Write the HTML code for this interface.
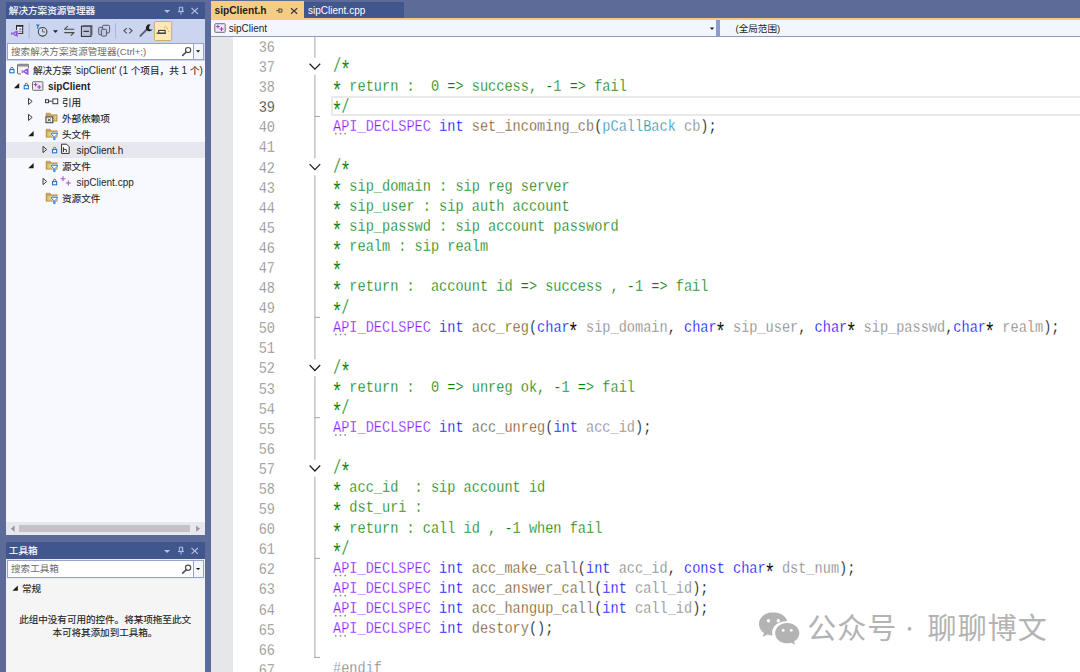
<!DOCTYPE html>
<html><head><meta charset="utf-8"><title>sipClient - Microsoft Visual Studio</title>
<style>
html,body{margin:0;padding:0}
body{width:1080px;height:672px;position:relative;overflow:hidden;background:#5d6b99;font-family:"Liberation Sans",sans-serif}
#bg div{position:absolute}
#ov{position:absolute;left:0;top:0;width:1080px;height:672px;font-family:"Liberation Sans","Noto Sans CJK SC",sans-serif}
#ov text{white-space:pre}
#code{position:absolute;left:333px;top:0;width:900px;height:672px;transform:scaleX(0.85000);transform-origin:0 0;font-family:"Liberation Mono",monospace;font-size:16.0px;color:#000}
#code .ln{position:absolute;left:0;white-space:pre;height:20.09px;line-height:20.69px}
#nums{position:absolute;left:0;top:0;width:0;height:0;font-family:"Liberation Mono",monospace;font-size:16.0px;color:#7f7f7f}
#nums .num{position:absolute;left:240px;width:41.18px;text-align:right;height:20.09px;line-height:20.69px;transform:scaleX(0.85000);transform-origin:0 0}
#nums .cur{color:#222}
#code{-webkit-text-stroke:0.26px #fff}
#nums{-webkit-text-stroke:0.3px #fff}
#code a{display:inline-block;transform:translateY(5.7px) scale(1.35,1.5);-webkit-text-stroke:0.1px #fff}
#code u{display:inline-block;text-decoration:none;transform:translateY(1.3px) scale(1,1.22)}
c{color:#008000} m{color:#8a1bff} k{color:#0000ff} f{color:#74531f} t{color:#2b91af} v{color:#808080}
</style></head><body>
<div id="bg">
<div style="left:5.5px;top:2px;width:199.5px;height:17px;background:#40568d;"></div>
<div style="left:5.5px;top:19px;width:199.5px;height:23px;background:#ccd5f0;"></div>
<div style="left:5.5px;top:42px;width:199.5px;height:20px;background:#ccd5f0;"></div>
<div style="left:7px;top:43px;width:197px;height:17px;background:#fff;border:1px solid #98a3c7;box-sizing:border-box;"></div>
<div style="left:193px;top:44px;width:10px;height:15px;background:#f3f6fd;border-left:1px solid #98a3c7;box-sizing:border-box;"></div>
<div style="left:5.5px;top:61px;width:199.5px;height:461px;background:#f7f9fe;"></div>
<div style="left:5.5px;top:141.5px;width:199.5px;height:16px;background:#e6e7ef;"></div>
<div style="left:5.5px;top:522px;width:199.5px;height:13px;background:#e8e8ec;"></div>
<div style="left:19px;top:525px;width:171px;height:7px;background:#c3c3c7;"></div>
<div style="left:5.5px;top:542px;width:199.5px;height:17px;background:#40568d;"></div>
<div style="left:5.5px;top:559px;width:199.5px;height:113px;background:#f5f5f5;"></div>
<div style="left:5.5px;top:559px;width:199.5px;height:20px;background:#e9ecf7;"></div>
<div style="left:7px;top:560px;width:197px;height:18px;background:#fff;border:1px solid #98a3c7;box-sizing:border-box;"></div>
<div style="left:193px;top:561px;width:10px;height:16px;background:#f3f6fd;border-left:1px solid #98a3c7;box-sizing:border-box;"></div>
<div style="left:211px;top:1px;width:93px;height:18px;background:#f5cc84;"></div>
<div style="left:304px;top:2px;width:100px;height:16px;background:#40568d;"></div>
<div style="left:211px;top:18px;width:869px;height:2px;background:#f5cc84;"></div>
<div style="left:211px;top:20px;width:869px;height:17px;background:#f3f6fe;"></div>
<div style="left:211px;top:36px;width:869px;height:1px;background:#8e9bbc;"></div>
<div style="left:716px;top:20px;width:4px;height:16px;background:#8c9ccd;"></div>
<div style="left:211px;top:37px;width:869px;height:635px;background:#fff;"></div>
<div style="left:211px;top:37px;width:22px;height:635px;background:#e6e7e8;"></div>
<div style="left:331px;top:96.3px;width:760px;height:20px;background:#fff;border:2px solid #e9e9e9;box-sizing:border-box;"></div>
</div>
<div id="nums">
<div class="num" style="top:38.00px">36</div>
<div class="num" style="top:58.09px">37</div>
<div class="num" style="top:78.18px">38</div>
<div class="num cur" style="top:98.27px">39</div>
<div class="num" style="top:118.36px">40</div>
<div class="num" style="top:138.45px">41</div>
<div class="num" style="top:158.54px">42</div>
<div class="num" style="top:178.63px">43</div>
<div class="num" style="top:198.72px">44</div>
<div class="num" style="top:218.81px">45</div>
<div class="num" style="top:238.90px">46</div>
<div class="num" style="top:258.99px">47</div>
<div class="num" style="top:279.08px">48</div>
<div class="num" style="top:299.17px">49</div>
<div class="num" style="top:319.26px">50</div>
<div class="num" style="top:339.35px">51</div>
<div class="num" style="top:359.44px">52</div>
<div class="num" style="top:379.53px">53</div>
<div class="num" style="top:399.62px">54</div>
<div class="num" style="top:419.71px">55</div>
<div class="num" style="top:439.80px">56</div>
<div class="num" style="top:459.89px">57</div>
<div class="num" style="top:479.98px">58</div>
<div class="num" style="top:500.07px">59</div>
<div class="num" style="top:520.16px">60</div>
<div class="num" style="top:540.25px">61</div>
<div class="num" style="top:560.34px">62</div>
<div class="num" style="top:580.43px">63</div>
<div class="num" style="top:600.52px">64</div>
<div class="num" style="top:620.61px">65</div>
<div class="num" style="top:640.70px">66</div>
<div class="num" style="top:660.79px">67</div>
</div>
<div id="code">
<div class="ln" style="top:36.40px"></div>
<div class="ln" style="top:56.49px"><c><u>/</u><a>*</a></c></div>
<div class="ln" style="top:76.58px"><c><a>*</a> return :  0 =&gt; success, -1 =&gt; fail</c></div>
<div class="ln" style="top:96.67px"><c><a>*</a><u>/</u></c></div>
<div class="ln" style="top:116.76px"><m>API_DECLSPEC</m> <k>int</k> <f>set_incoming_cb</f>(<t>pCallBack</t> <v>cb</v>);</div>
<div class="ln" style="top:136.85px"></div>
<div class="ln" style="top:156.94px"><c><u>/</u><a>*</a></c></div>
<div class="ln" style="top:177.03px"><c><a>*</a> sip_domain : sip reg server</c></div>
<div class="ln" style="top:197.12px"><c><a>*</a> sip_user : sip auth account</c></div>
<div class="ln" style="top:217.21px"><c><a>*</a> sip_passwd : sip account password</c></div>
<div class="ln" style="top:237.30px"><c><a>*</a> realm : sip realm</c></div>
<div class="ln" style="top:257.39px"><c><a>*</a></c></div>
<div class="ln" style="top:277.48px"><c><a>*</a> return :  account id =&gt; success , -1 =&gt; fail</c></div>
<div class="ln" style="top:297.57px"><c><a>*</a><u>/</u></c></div>
<div class="ln" style="top:317.66px"><m>API_DECLSPEC</m> <k>int</k> <f>acc_reg</f>(<k>char</k><a>*</a> <v>sip_domain</v>, <k>char</k><a>*</a> <v>sip_user</v>, <k>char</k><a>*</a> <v>sip_passwd</v>,<k>char</k><a>*</a> <v>realm</v>);</div>
<div class="ln" style="top:337.75px"></div>
<div class="ln" style="top:357.84px"><c><u>/</u><a>*</a></c></div>
<div class="ln" style="top:377.93px"><c><a>*</a> return :  0 =&gt; unreg ok, -1 =&gt; fail</c></div>
<div class="ln" style="top:398.02px"><c><a>*</a><u>/</u></c></div>
<div class="ln" style="top:418.11px"><m>API_DECLSPEC</m> <k>int</k> <f>acc_unreg</f>(<k>int</k> <v>acc_id</v>);</div>
<div class="ln" style="top:438.20px"></div>
<div class="ln" style="top:458.29px"><c><u>/</u><a>*</a></c></div>
<div class="ln" style="top:478.38px"><c><a>*</a> acc_id  : sip account id</c></div>
<div class="ln" style="top:498.47px"><c><a>*</a> dst_uri :</c></div>
<div class="ln" style="top:518.56px"><c><a>*</a> return : call id , -1 when fail</c></div>
<div class="ln" style="top:538.65px"><c><a>*</a><u>/</u></c></div>
<div class="ln" style="top:558.74px"><m>API_DECLSPEC</m> <k>int</k> <f>acc_make_call</f>(<k>int</k> <v>acc_id</v>, <k>const</k> <k>char</k><a>*</a> <v>dst_num</v>);</div>
<div class="ln" style="top:578.83px"><m>API_DECLSPEC</m> <k>int</k> <f>acc_answer_call</f>(<k>int</k> <v>call_id</v>);</div>
<div class="ln" style="top:598.92px"><m>API_DECLSPEC</m> <k>int</k> <f>acc_hangup_call</f>(<k>int</k> <v>call_id</v>);</div>
<div class="ln" style="top:619.01px"><m>API_DECLSPEC</m> <k>int</k> <f>destory</f>();</div>
<div class="ln" style="top:639.10px"></div>
<div class="ln" style="top:659.19px"><v>#endif</v></div>
</div>
<svg id="ov" width="1080" height="672" viewBox="0 0 1080 672">
<text x="8.80" y="14.20" font-size="9.6" fill="#fff" stroke="#fff" stroke-width="0.15" font-family="'Liberation Sans','Noto Sans CJK SC',sans-serif">解决方案资源管理器</text>
<text x="8.80" y="554.20" font-size="9.6" fill="#fff" stroke="#fff" stroke-width="0.15" font-family="'Liberation Sans','Noto Sans CJK SC',sans-serif">工具箱</text>
<text x="11.00" y="54.80" font-size="9.6" fill="#6d6d6d" font-family="'Liberation Sans','Noto Sans CJK SC',sans-serif">搜索解决方案资源管理器</text>
<text x="116.60" y="54.80" font-size="9.6" fill="#6d6d6d">(Ctrl+;)</text>
<text x="11.00" y="572.40" font-size="9.6" fill="#6d6d6d" font-family="'Liberation Sans','Noto Sans CJK SC',sans-serif">搜索工具箱</text>
<text x="33.00" y="73.60" font-size="9.6" fill="#1e1e1e" stroke="#1e1e1e" stroke-width="0.12" font-family="'Liberation Sans','Noto Sans CJK SC',sans-serif">解决方案</text>
<text x="71.40" y="73.60" font-size="10" fill="#1e1e1e"> &#x27;sipClient&#x27; (1 </text>
<text x="130.79" y="73.60" font-size="9.6" fill="#1e1e1e" stroke="#1e1e1e" stroke-width="0.12" font-family="'Liberation Sans','Noto Sans CJK SC',sans-serif">个项目，共</text>
<text x="178.79" y="73.60" font-size="10" fill="#1e1e1e"> 1 </text>
<text x="189.91" y="73.60" font-size="9.6" fill="#1e1e1e" stroke="#1e1e1e" stroke-width="0.12" font-family="'Liberation Sans','Noto Sans CJK SC',sans-serif">个</text>
<text x="199.51" y="73.60" font-size="10" fill="#1e1e1e">)</text>
<text x="48.00" y="89.60" font-size="10" fill="#1e1e1e" font-weight="bold">sipClient</text>
<text x="62.00" y="105.60" font-size="9.6" fill="#1e1e1e" stroke="#1e1e1e" stroke-width="0.12" font-family="'Liberation Sans','Noto Sans CJK SC',sans-serif">引用</text>
<text x="62.00" y="121.60" font-size="9.6" fill="#1e1e1e" stroke="#1e1e1e" stroke-width="0.12" font-family="'Liberation Sans','Noto Sans CJK SC',sans-serif">外部依赖项</text>
<text x="62.00" y="137.60" font-size="9.6" fill="#1e1e1e" stroke="#1e1e1e" stroke-width="0.12" font-family="'Liberation Sans','Noto Sans CJK SC',sans-serif">头文件</text>
<text x="76.50" y="153.60" font-size="10" fill="#1e1e1e">sipClient.h</text>
<text x="62.00" y="169.60" font-size="9.6" fill="#1e1e1e" stroke="#1e1e1e" stroke-width="0.12" font-family="'Liberation Sans','Noto Sans CJK SC',sans-serif">源文件</text>
<text x="76.50" y="185.60" font-size="10" fill="#1e1e1e">sipClient.cpp</text>
<text x="62.00" y="201.60" font-size="9.6" fill="#1e1e1e" stroke="#1e1e1e" stroke-width="0.12" font-family="'Liberation Sans','Noto Sans CJK SC',sans-serif">资源文件</text>
<text x="22.00" y="592.00" font-size="9.6" fill="#1e1e1e" stroke="#1e1e1e" stroke-width="0.12" font-family="'Liberation Sans','Noto Sans CJK SC',sans-serif">常规</text>
<text x="19.20" y="623.30" font-size="9.6" letter-spacing="-0.05" fill="#1e1e1e" stroke="#1e1e1e" stroke-width="0.12" font-family="'Liberation Sans','Noto Sans CJK SC',sans-serif">此组中没有可用的控件。将某项拖至此文</text>
<text x="52.40" y="636.40" font-size="9.6" letter-spacing="-0.05" fill="#1e1e1e" stroke="#1e1e1e" stroke-width="0.12" font-family="'Liberation Sans','Noto Sans CJK SC',sans-serif">本可将其添加到工具箱。</text>
<text x="214.5" y="13.8" font-size="10.2" font-weight="bold" fill="#1e1e1e">sipClient.h</text>
<text x="308" y="13.6" font-size="10" fill="#fff">sipClient.cpp</text>
<text x="228.7" y="32" font-size="10" fill="#1e1e1e">sipClient</text>
<text x="735.50" y="32.00" font-size="9.6" fill="#1e1e1e">(</text>
<text x="738.70" y="32.00" font-size="9.6" fill="#1e1e1e" font-family="'Liberation Sans','Noto Sans CJK SC',sans-serif">全局范围</text>
<text x="777.10" y="32.00" font-size="9.6" fill="#1e1e1e">)</text>
<rect x="314.4" y="37.0" width="1" height="20.9" fill="#a6a6a6"/>
<path d="M309.6 63.7 L314.9 69.2 L320.2 63.7" fill="none" stroke="#1e1e1e" stroke-width="1.25"/>
<rect x="314.4" y="74.8" width="1" height="42.0" fill="#a6a6a6"/>
<rect x="314.4" y="115.9" width="5.6" height="1" fill="#a6a6a6"/>
<path d="M309.6 164.1 L314.9 169.6 L320.2 164.1" fill="none" stroke="#1e1e1e" stroke-width="1.25"/>
<rect x="314.4" y="175.2" width="1" height="142.4" fill="#a6a6a6"/>
<rect x="314.4" y="316.8" width="5.6" height="1" fill="#a6a6a6"/>
<path d="M309.6 365.0 L314.9 370.5 L320.2 365.0" fill="none" stroke="#1e1e1e" stroke-width="1.25"/>
<rect x="314.4" y="376.1" width="1" height="42.0" fill="#a6a6a6"/>
<rect x="314.4" y="417.2" width="5.6" height="1" fill="#a6a6a6"/>
<path d="M309.6 465.5 L314.9 471.0 L320.2 465.5" fill="none" stroke="#1e1e1e" stroke-width="1.25"/>
<rect x="314.4" y="476.6" width="1" height="82.2" fill="#a6a6a6"/>
<rect x="314.4" y="557.9" width="5.6" height="1" fill="#a6a6a6"/>
<rect x="314.4" y="116.8" width="1" height="41.6" fill="#a6a6a6"/>
<rect x="314.4" y="317.7" width="1" height="41.6" fill="#a6a6a6"/>
<rect x="314.4" y="418.1" width="1" height="41.6" fill="#a6a6a6"/>
<rect x="314.4" y="558.8" width="1" height="99.1" fill="#a6a6a6"/>
<rect x="314.4" y="656.9" width="5.6" height="1" fill="#a6a6a6"/>
<rect x="335.0" y="132.9" width="1.6" height="1.5" fill="#8a8a8a"/>
<rect x="339.7" y="132.9" width="1.6" height="1.5" fill="#8a8a8a"/>
<rect x="344.4" y="132.9" width="1.6" height="1.5" fill="#8a8a8a"/>
<rect x="335.0" y="333.8" width="1.6" height="1.5" fill="#8a8a8a"/>
<rect x="339.7" y="333.8" width="1.6" height="1.5" fill="#8a8a8a"/>
<rect x="344.4" y="333.8" width="1.6" height="1.5" fill="#8a8a8a"/>
<rect x="335.0" y="434.2" width="1.6" height="1.5" fill="#8a8a8a"/>
<rect x="339.7" y="434.2" width="1.6" height="1.5" fill="#8a8a8a"/>
<rect x="344.4" y="434.2" width="1.6" height="1.5" fill="#8a8a8a"/>
<rect x="335.0" y="574.8" width="1.6" height="1.5" fill="#8a8a8a"/>
<rect x="339.7" y="574.8" width="1.6" height="1.5" fill="#8a8a8a"/>
<rect x="344.4" y="574.8" width="1.6" height="1.5" fill="#8a8a8a"/>
<rect x="335.0" y="594.9" width="1.6" height="1.5" fill="#8a8a8a"/>
<rect x="339.7" y="594.9" width="1.6" height="1.5" fill="#8a8a8a"/>
<rect x="344.4" y="594.9" width="1.6" height="1.5" fill="#8a8a8a"/>
<rect x="335.0" y="615.0" width="1.6" height="1.5" fill="#8a8a8a"/>
<rect x="339.7" y="615.0" width="1.6" height="1.5" fill="#8a8a8a"/>
<rect x="344.4" y="615.0" width="1.6" height="1.5" fill="#8a8a8a"/>
<rect x="335.0" y="635.1" width="1.6" height="1.5" fill="#8a8a8a"/>
<rect x="339.7" y="635.1" width="1.6" height="1.5" fill="#8a8a8a"/>
<rect x="344.4" y="635.1" width="1.6" height="1.5" fill="#8a8a8a"/>
<text x="807.20" y="639.00" font-size="29" letter-spacing="1.04" fill="#b3b3b3" font-family="'Liberation Sans','Noto Sans CJK SC',sans-serif">公众号</text>
<circle cx="909.5" cy="628.8" r="1.9" fill="#b3b3b3"/>
<text x="927.60" y="639.00" font-size="29" letter-spacing="1.04" fill="#b3b3b3" font-family="'Liberation Sans','Noto Sans CJK SC',sans-serif">聊聊博文</text>
<g fill="#b3b3b3">
<path d="M773 612.3c-7.8 0-14.1 5.2-14.1 11.7 0 3.6 2 6.8 5.100 9l-1.400 4.100 4.800-2.500c1.600.5 3.400.9 5.200 1-.3-1-.5-2-.5-3.100 0-6.300 6.100-11.300 13.600-11.300.5 0 1 0 1.500.1-1.300-5.200-7.100-9-14.200-9z"/>
<path d="M787.2 623.1c-6.700 0-12.100 4.500-12.100 10.100s5.400 10.100 12.100 10.100c1.400 0 2.800-.2 4.100-.6l3.900 2.100-1.100-3.400c3.100-1.800 5.200-4.800 5.200-8.200 0-5.600-5.400-10.100-12.100-10.100z"/>
</g>
<g fill="#fff"><circle cx="768.5" cy="620.8" r="1.7"/><circle cx="778.3" cy="620.8" r="1.7"/><circle cx="783.2" cy="630.4" r="1.45"/><circle cx="791.2" cy="630.4" r="1.45"/></g>
<path d="M164 10 h6.2 l-3.1 3.1 Z" fill="#b4bfe2"/>
<path d="M179.3 7.2 h3.4 v4.3 h-3.4 Z M178 11.6 h6 M181 11.6 v3" fill="none" stroke="#b4bfe2" stroke-width="1"/>
<rect x="181.8" y="7.2" width="0.9" height="4.3" fill="#b4bfe2"/>
<path d="M191.5 8 l6.4 5.8 M197.9 8 l-6.4 5.8" stroke="#b4bfe2" stroke-width="1.1" fill="none"/>
<path d="M164 550 h6.2 l-3.1 3.1 Z" fill="#b4bfe2"/>
<path d="M179.3 547.2 h3.4 v4.3 h-3.4 Z M178 551.6 h6 M181 551.6 v3" fill="none" stroke="#b4bfe2" stroke-width="1"/>
<rect x="181.8" y="547.2" width="0.9" height="4.3" fill="#b4bfe2"/>
<path d="M191.5 548 l6.4 5.8 M197.9 548 l-6.4 5.8" stroke="#b4bfe2" stroke-width="1.1" fill="none"/>
<rect x="16.5" y="25.6" width="6.2" height="7.8" fill="#e9ecf6" stroke="#2b2b2b" stroke-width="1"/>
<rect x="16" y="25" width="7.2" height="1.7" fill="#2b2b2b"/>
<rect x="19.2" y="28.3" width="2.2" height="2" fill="#8a8d96"/><rect x="18.4" y="31.2" width="3.4" height="0.8" fill="#8a8d96"/>
<rect x="10.6" y="30" width="7.6" height="7.2" fill="#ccd5f0"/>
<path d="M17.72 30.40 L15.17 31.17 L12.88 33.09 L11.67 32.13 L11.00 32.51 L11.00 34.69 L11.67 35.07 L12.88 34.11 L15.17 36.03 L17.72 36.80 Z M15.84 32.45 L14.09 33.60 L15.84 34.75 Z M11.67 32.96 L12.34 33.60 L11.67 34.24 Z" fill="#9355d8" fill-rule="evenodd"/>
<rect x="28.6" y="23" width="1" height="15.5" fill="#a9b5da"/>
<path d="M35.8 24.6 h4 l-1.4 1.7 v2.5 h-1.2 v-2.5 Z" fill="#1177cc"/>
<circle cx="42.6" cy="31.8" r="4.3" fill="#d6ddf3" stroke="#3d3d3d" stroke-width="1.05"/>
<path d="M42.6 28.9 V32 H45.2" fill="none" stroke="#555" stroke-width="0.9"/>
<path d="M53 30.2 h5 l-2.5 2.7 Z" fill="#222"/>
<path d="M74.3 29.2 H64.6 L67.8 26.2" fill="none" stroke="#4a4a4a" stroke-width="1.1" stroke-linejoin="round"/>
<path d="M64.3 32.6 H74 L70.8 35.6" fill="none" stroke="#4a4a4a" stroke-width="1.1" stroke-linejoin="round"/>
<path d="M82.6 24.9 h10 v10.3 h-1.4 v-9 h-8.6 Z" fill="#7c8094"/>
<rect x="81.4" y="26.2" width="9.6" height="10.2" fill="#bcc2d9" stroke="#2b2b2b" stroke-width="1"/>
<rect x="83.4" y="30.8" width="5.6" height="1.1" fill="#2b2b2b"/>
<rect x="98.7" y="27.3" width="6.2" height="7.4" rx="1" fill="#c6cbe0" stroke="#4d5266" stroke-width="0.95"/>
<rect x="102.6" y="25.3" width="7" height="7.6" rx="1" fill="#c9cee3" stroke="#4d5266" stroke-width="0.95"/>
<rect x="101.4" y="29.3" width="5.2" height="6.8" rx="1" fill="#c2c7dc" stroke="#4d5266" stroke-width="0.95"/>
<rect x="115" y="23" width="1" height="15.5" fill="#a9b5da"/>
<path d="M126.8 28.2 L124 30.8 L126.8 33.4 M129.2 28.2 L132 30.8 L129.2 33.4" fill="none" stroke="#505050" stroke-width="1.15"/>
<path d="M140.4 35.9 L147.6 28.6" stroke="#5e6068" stroke-width="2.0" stroke-linecap="round" fill="none"/>
<path d="M150.7 24.7 a3.4 3.4 0 1 0 1.8 4.5 l-2.1 0.6 l-1.5 -1.5 l0.5 -2.2 Z" fill="#1f1f1f"/>
<rect x="154.4" y="21.5" width="17.3" height="19" rx="1.2" fill="#fde8b6" stroke="#c8a75c" stroke-width="0.9"/>
<path d="M156.6 33.2 H165.9" stroke="#2b2b2b" stroke-width="1.1"/>
<rect x="158.7" y="30.4" width="6.4" height="2.6" fill="#fff4d6" stroke="#2b2b2b" stroke-width="1"/>
<rect x="164.04999999999998" y="26.75" width="1.1" height="1.1" fill="#d9a43a"/>
<rect x="166.85" y="27.95" width="1.1" height="1.1" fill="#d9a43a"/>
<rect x="168.14999999999998" y="30.75" width="1.1" height="1.1" fill="#d9a43a"/>
<rect x="165.75" y="26.349999999999998" width="1.1" height="1.1" fill="#d9a43a"/>
<circle cx="188.1" cy="50.1" r="2.6" fill="none" stroke="#4d4d4d" stroke-width="1.2"/>
<path d="M186.2 52 L182.7 55.4" stroke="#4d4d4d" stroke-width="1.6" stroke-linecap="round"/>
<path d="M196 50.2 h4.2 l-2.1 2.2 Z" fill="#111"/>
<circle cx="188.1" cy="567.8000000000001" r="2.6" fill="none" stroke="#4d4d4d" stroke-width="1.2"/>
<path d="M186.2 569.7 L182.7 573.1" stroke="#4d4d4d" stroke-width="1.6" stroke-linecap="round"/>
<path d="M196 567.9000000000001 h4.2 l-2.1 2.2 Z" fill="#111"/>
<path d="M10.70 69.60 V68.50 a1.2 1.2 0 0 1 2.4 0 V69.60" fill="none" stroke="#1673cf" stroke-width="1"/><rect x="9.80" y="69.60" width="4.2" height="3.2" fill="#fff" stroke="#1673cf" stroke-width="1.05"/>
<rect x="17.5" y="64.3" width="11" height="9.6" rx="0.8" fill="#f1f1f4" stroke="#6b6b6b" stroke-width="1"/>
<rect x="17.5" y="64.3" width="11" height="2.2" fill="#8e8e92"/>
<rect x="21" y="67.8" width="8.8" height="7.4" fill="#f7f9fe"/>
<path d="M28.53 68.30 L25.90 69.09 L23.54 71.07 L22.29 70.08 L21.60 70.48 L21.60 72.72 L22.29 73.12 L23.54 72.13 L25.90 74.11 L28.53 74.90 Z M26.59 70.41 L24.79 71.60 L26.59 72.79 Z M22.29 70.94 L22.99 71.60 L22.29 72.26 Z" fill="#9355d8" fill-rule="evenodd"/>
<path d="M19.20 82.90 V88.30 H13.80 Z" fill="#1e1e1e"/>
<path d="M25.10 85.60 V84.50 a1.2 1.2 0 0 1 2.4 0 V85.60" fill="none" stroke="#1673cf" stroke-width="1"/><rect x="24.20" y="85.60" width="4.2" height="3.2" fill="#fff" stroke="#1673cf" stroke-width="1.05"/>
<rect x="32.5" y="81.7" width="10.4" height="8.6" rx="0.8" fill="#ececf0" stroke="#6f6f73" stroke-width="1"/>
<path d="M35.6 82.8 v3.6 M33.8 84.60000000000001 h3.6 M39.2 85.0 v4 M37.2 87.0 h4" stroke="#a335c8" stroke-width="1" fill="none"/>
<path d="M28.50 98.30 L32.20 101.40 L28.50 104.50 Z" fill="none" stroke="#3c3c3c" stroke-width="1" stroke-linejoin="round"/>
<rect x="45.5" y="99.7" width="3" height="3" fill="#fff" stroke="#3a3a3a" stroke-width="1"/>
<path d="M48.9 101.2 H52.6" stroke="#3a3a3a" stroke-width="1"/>
<rect x="52.9" y="98.9" width="4.8" height="4.8" fill="#fff" stroke="#3a3a3a" stroke-width="1"/>
<path d="M28.50 114.30 L32.20 117.40 L28.50 120.50 Z" fill="none" stroke="#3c3c3c" stroke-width="1" stroke-linejoin="round"/>
<path d="M46.00 113.20 h4.2 l1.2 1.5 h5.8 v6.6 h-11.2 Z" fill="#caa24b" stroke="#b38a35" stroke-width="0.5"/><path d="M47.30 115.80 h9.0 v4.6 h-9.0 Z" fill="#f3e2b6" opacity="0.55"/>
<rect x="46" y="116.9" width="6.8" height="5.8" fill="#f4f4f4" stroke="#3a3a3a" stroke-width="1"/>
<path d="M47.8 118.6 l3 2.6 M50.8 118.6 l-3 2.6" stroke="#3a3a3a" stroke-width="0.9"/>
<path d="M33.60 130.90 V136.30 H28.20 Z" fill="#1e1e1e"/>
<path d="M46.00 129.20 h4.2 l1.2 1.5 h5.8 v6.6 h-11.2 Z" fill="#caa24b" stroke="#b38a35" stroke-width="0.5"/><path d="M47.30 131.80 h9.0 v4.6 h-9.0 Z" fill="#f3e2b6" opacity="0.55"/>
<path d="M50.60 132.40 h7.6 v2 l-2.6 2.6 v3.6 h-2.4 v-3.6 l-2.6 -2.6 Z" fill="#f7f9fe"/><path d="M51.40 133.20 h6 v0.9 l-2.4 2.5 v3 h-1.2 v-3 l-2.4 -2.5 Z" fill="none" stroke="#1673cf" stroke-width="1" stroke-linejoin="round"/>
<path d="M43.00 146.40 L46.70 149.50 L43.00 152.60 Z" fill="none" stroke="#3c3c3c" stroke-width="1" stroke-linejoin="round"/>
<path d="M53.40 149.60 V148.50 a1.2 1.2 0 0 1 2.4 0 V149.60" fill="none" stroke="#1673cf" stroke-width="1"/><rect x="52.50" y="149.60" width="4.2" height="3.2" fill="#fff" stroke="#1673cf" stroke-width="1.05"/>
<path d="M61.6 144.2 h5 l2.6 2.6 v6.6 h-7.6 Z" fill="#fff" stroke="#2f2f2f" stroke-width="1"/>
<path d="M63.4 147.2 v4.8 M63.4 149.9 q1.5 -1.3 2.9 -0.2 v2.3" fill="none" stroke="#2f2f2f" stroke-width="1"/>
<path d="M33.60 162.90 V168.30 H28.20 Z" fill="#1e1e1e"/>
<path d="M46.00 161.20 h4.2 l1.2 1.5 h5.8 v6.6 h-11.2 Z" fill="#caa24b" stroke="#b38a35" stroke-width="0.5"/><path d="M47.30 163.80 h9.0 v4.6 h-9.0 Z" fill="#f3e2b6" opacity="0.55"/>
<path d="M50.60 164.40 h7.6 v2 l-2.6 2.6 v3.6 h-2.4 v-3.6 l-2.6 -2.6 Z" fill="#f7f9fe"/><path d="M51.40 165.20 h6 v0.9 l-2.4 2.5 v3 h-1.2 v-3 l-2.4 -2.5 Z" fill="none" stroke="#1673cf" stroke-width="1" stroke-linejoin="round"/>
<path d="M43.00 178.40 L46.70 181.50 L43.00 184.60 Z" fill="none" stroke="#3c3c3c" stroke-width="1" stroke-linejoin="round"/>
<path d="M53.40 181.60 V180.50 a1.2 1.2 0 0 1 2.4 0 V181.60" fill="none" stroke="#1673cf" stroke-width="1"/><rect x="52.50" y="181.60" width="4.2" height="3.2" fill="#fff" stroke="#1673cf" stroke-width="1.05"/>
<path d="M63 176.2 v5 M60.5 178.7 h5 M68.3 180.4 v5 M65.8 182.9 h5" stroke="#b14fd0" stroke-width="1.05" fill="none"/>
<path d="M46.00 193.20 h4.2 l1.2 1.5 h5.8 v6.6 h-11.2 Z" fill="#caa24b" stroke="#b38a35" stroke-width="0.5"/><path d="M47.30 195.80 h9.0 v4.6 h-9.0 Z" fill="#f3e2b6" opacity="0.55"/>
<path d="M50.60 196.40 h7.6 v2 l-2.6 2.6 v3.6 h-2.4 v-3.6 l-2.6 -2.6 Z" fill="#f7f9fe"/><path d="M51.40 197.20 h6 v0.9 l-2.4 2.5 v3 h-1.2 v-3 l-2.4 -2.5 Z" fill="none" stroke="#1673cf" stroke-width="1" stroke-linejoin="round"/>
<path d="M17.80 585.40 V590.80 H12.40 Z" fill="#1e1e1e"/>
<path d="M14.6 525.6 v6.2 l-3.8 -3.1 Z" fill="#9297a8"/>
<path d="M196.2 525.6 v6.2 l3.8 -3.1 Z" fill="#9297a8"/>
<path d="M276.3 10.6 h2.4 M278.9 8.4 v4.4 M279 9.1 h3 v3 h-3" fill="none" stroke="#3b3b3b" stroke-width="0.9"/>
<path d="M291 8.2 l6.2 5.6 M297.2 8.2 l-6.2 5.6" stroke="#3b3b3b" stroke-width="1.15" fill="none"/>
<rect x="214.8" y="23.7" width="10.4" height="8.6" rx="0.8" fill="#ececf0" stroke="#6f6f73" stroke-width="1"/>
<path d="M217.9 24.8 v3.6 M216.10000000000002 26.599999999999998 h3.6 M221.5 27.0 v4 M219.5 29.0 h4" stroke="#a335c8" stroke-width="1" fill="none"/>
<path d="M709.8 27.6 h4.4 l-2.2 2.3 Z" fill="#1e1e1e"/>
</svg>
</body></html>
